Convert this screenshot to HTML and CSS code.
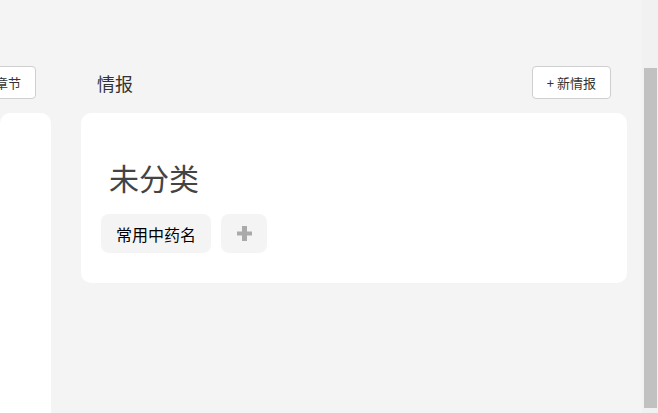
FILE: index.html
```html
<!DOCTYPE html>
<html lang="zh-CN">

<head>
    <meta charset="UTF-8">
    <meta name="viewport" content="width=device-width, initial-scale=1.0">
    <title>情报</title>
    <link rel="stylesheet" href="styles.css">
</head>

<body>
    <div class="page">
        <!-- Chapters column (scrolled partly out of view) -->
        <section class="column column-left">
            <div class="column-head">
                <button class="btn">+ 新章节</button>
            </div>
            <div class="card card-tall"></div>
        </section>

        <!-- Intel column -->
        <section class="column column-main">
            <div class="column-head">
                <h2 class="column-title">情报</h2>
                <button class="btn">+ 新情报</button>
            </div>
            <div class="card">
                <h3 class="group-title">未分类</h3>
                <div class="tags">
                    <span class="tag">常用中药名</span>
                    <span class="tag tag-add" title="添加">
                        <svg width="15" height="15" viewBox="0 0 15 15">
                            <rect x="5" y="0" width="5" height="15" fill="#aaa" />
                            <rect x="0" y="5.5" width="15" height="4" fill="#aaa" />
                        </svg>
                    </span>
                </div>
            </div>
        </section>
    </div>

    <!-- Scrollbar -->
    <div class="scrollbar">
        <div class="scrollbar-thumb"></div>
    </div>
</body>

</html>
```

FILE: styles.css
```css
body {
    margin: 0;
    padding: 0;
    height: 413px;
    overflow: hidden;
    display: flex;
    background-color: #f4f4f4;
    font-family: 'Noto Sans CJK SC', 'Noto Sans', sans-serif;
    color: #333;
}

.page {
    flex: 1;
    display: flex;
    gap: 30px;
    padding-top: 66px;
    overflow: hidden;
}

.column {
    flex-shrink: 0;
    display: flex;
    flex-direction: column;
}

.column-left {
    width: 51px;
}

.column-main {
    width: 546px;
}

.column-head {
    height: 33px;
    margin-bottom: 14px;
    padding: 0 16px;
    display: flex;
    align-items: center;
    justify-content: space-between;
}

.column-left .column-head {
    justify-content: flex-end;
    padding: 0 15px 0 0;
}

.column-title {
    margin: 0;
    font-size: 18px;
    font-weight: normal;
    color: #333;
}

.btn {
    flex-shrink: 0;
    height: 33px;
    padding: 0 14px;
    background-color: #fff;
    border: 1px solid #cfcfcf;
    border-radius: 4px;
    font-family: 'Noto Sans CJK SC', 'Noto Sans', sans-serif;
    font-size: 13px;
    color: #333;
    white-space: nowrap;
}

.card {
    flex-shrink: 0;
    background-color: #fff;
    border-radius: 10px;
    padding: 44px 20px 30px;
}

.card-tall {
    height: 400px;
    padding: 0;
}

.group-title {
    margin: 0 0 17px 8px;
    font-size: 30px;
    line-height: 40px;
    font-weight: normal;
    color: #444;
}

.tags {
    display: flex;
    gap: 10px;
}

.tag {
    height: 39px;
    padding: 0 15px;
    display: flex;
    align-items: center;
    background-color: #f4f4f4;
    border-radius: 8px;
    font-size: 16px;
    color: #000;
}

.tag-add {
    width: 46px;
    padding: 0;
    justify-content: center;
}

.scrollbar {
    width: 16px;
    flex-shrink: 0;
    background-color: #f1f1f1;
    padding: 68px 1px 5px 2px;
    box-sizing: border-box;
}

.scrollbar-thumb {
    height: 100%;
    background-color: #c1c1c1;
}
```
